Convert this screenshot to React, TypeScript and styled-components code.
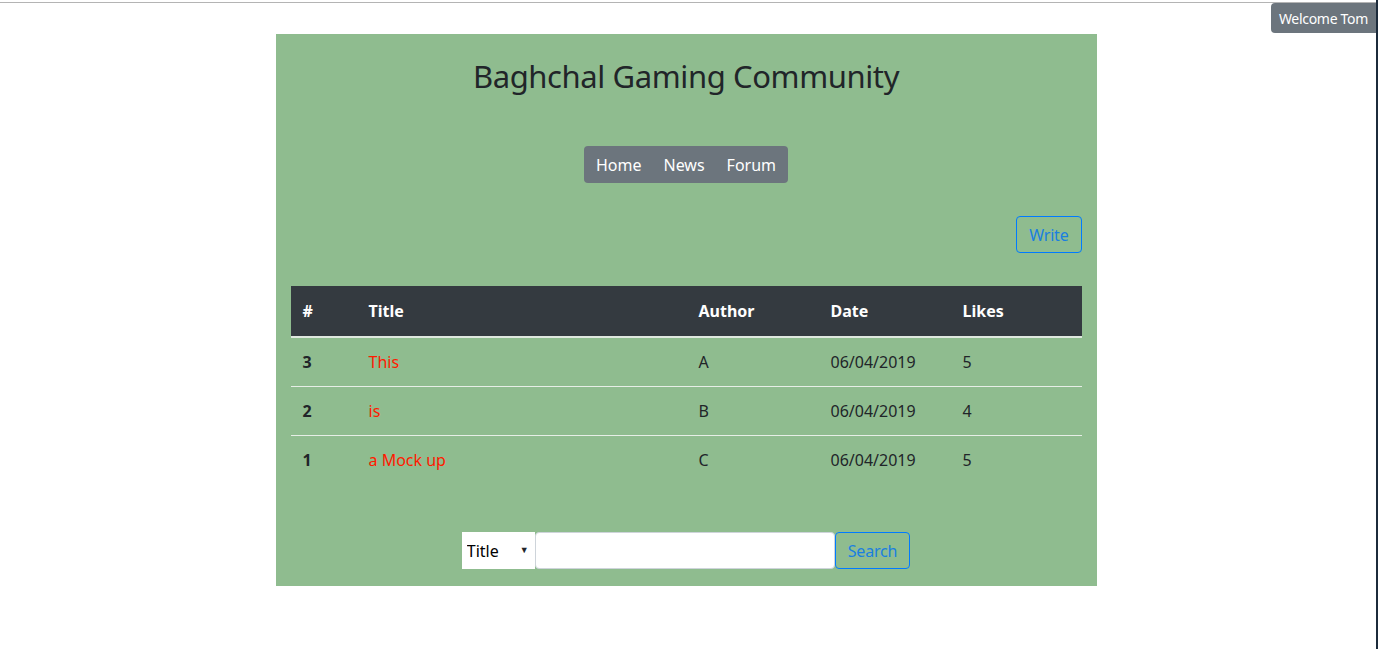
import styled, { createGlobalStyle } from 'styled-components'

const GlobalStyle = createGlobalStyle`
  html, body {
    margin: 0;
    padding: 0;
    background: #ffffff;
  }
  body {
    font-family: 'Noto Sans', 'Open Sans', sans-serif;
    color: #212529;
  }
  * {
    box-sizing: border-box;
  }
`

const Frame = styled.div`
  min-height: 100vh;
  border-right: 2px solid #1c2b3b;
  display: flex;
  flex-direction: column;
`

const TopRule = styled.div`
  margin-top: 2px;
  height: 1px;
  background: #b4b4b4;
`

const BadgeRow = styled.div`
  display: flex;
  justify-content: flex-end;
  height: 31px;
`

const Badge = styled.div`
  width: 105px;
  height: 30px;
  display: flex;
  align-items: center;
  justify-content: center;
  background: #6c757d;
  color: #ffffff;
  font-size: 14px;
  letter-spacing: -0.3px;
  border-radius: 4px 0 0 4px;
`

const Board = styled.div`
  width: 821px;
  margin: 0 auto;
  transform: translateX(-2px);
  background: #8fbc8f;
  padding: 0 15px 17px;
  display: flex;
  flex-direction: column;
  align-items: center;
`

const Heading = styled.h2`
  margin: 23px 0 0;
  font-size: 31px;
  font-weight: 400;
  line-height: 38px;
  letter-spacing: -0.4px;
  color: #212529;
`

const Nav = styled.nav`
  margin-top: 51px;
  display: flex;
  background: #6c757d;
  border-radius: 4px;
  padding: 0 1px;
  height: 37px;
  align-items: center;
`

const NavLink = styled.a`
  color: #ffffff;
  font-size: 16px;
  padding: 0 11px;
  text-decoration: none;
`

const Toolbar = styled.div`
  align-self: stretch;
  display: flex;
  justify-content: flex-end;
  margin-top: 33px;
`

const OutlineButton = styled.button`
  height: 37px;
  padding: 0 12px;
  background: transparent;
  border: 1px solid #007bff;
  border-radius: 4px;
  color: #1a7fe0;
  font-family: inherit;
  font-size: 16px;
  letter-spacing: -0.2px;
`

const Table = styled.table`
  align-self: stretch;
  margin-top: 33px;
  border-collapse: collapse;
  font-size: 16px;
`

const HeadCell = styled.th<{ $w?: number }>`
  background: #343a40;
  color: #ffffff;
  font-weight: 700;
  text-align: left;
  padding: 13px 12px;
  line-height: 24px;
  border-bottom: 2px solid #dfe8df;
  width: ${p => (p.$w ? `${p.$w}px` : 'auto')};
`

const Cell = styled.td<{ $bold?: boolean; $link?: boolean }>`
  padding: 12px;
  line-height: 24px;
  border-top: 1px solid #e6eee6;
  font-weight: ${p => (p.$bold ? 700 : 400)};
  color: ${p => (p.$link ? '#ff1a00' : '#212529')};
`

const FirstRow = styled.tr`
  td {
    border-top: none;
  }
`

const SearchForm = styled.form`
  margin-top: 48px;
  display: flex;
  height: 37px;
`

const SelectWrap = styled.div`
  position: relative;
  width: 73px;
  background: #ffffff;
`

const Select = styled.select`
  appearance: none;
  width: 100%;
  height: 100%;
  border: none;
  background: transparent;
  font-family: inherit;
  font-size: 16px;
  padding: 0 5px;
  color: #000000;
`

const Arrow = styled.span`
  position: absolute;
  right: 6px;
  top: 11px;
  font-size: 9px;
  pointer-events: none;
`

const SearchInput = styled.input`
  width: 300px;
  border: 1px solid #ced4da;
  border-radius: 4px;
  background: #ffffff;
`

const rows = [
  { id: 3, title: 'This', author: 'A', date: '06/04/2019', likes: 5 },
  { id: 2, title: 'is', author: 'B', date: '06/04/2019', likes: 4 },
  { id: 1, title: 'a Mock up', author: 'C', date: '06/04/2019', likes: 5 },
]

function App() {
  return (
    <>
      <GlobalStyle />
      <Frame>
        <TopRule />
        <BadgeRow>
          <Badge>Welcome Tom</Badge>
        </BadgeRow>
        <Board>
          <Heading>Baghchal Gaming Community</Heading>
          <Nav>
            <NavLink>Home</NavLink>
            <NavLink>News</NavLink>
            <NavLink>Forum</NavLink>
          </Nav>
          <Toolbar>
            <OutlineButton>Write</OutlineButton>
          </Toolbar>
          <Table>
            <thead>
              <tr>
                <HeadCell $w={66}>#</HeadCell>
                <HeadCell $w={330}>Title</HeadCell>
                <HeadCell $w={132}>Author</HeadCell>
                <HeadCell $w={132}>Date</HeadCell>
                <HeadCell>Likes</HeadCell>
              </tr>
            </thead>
            <tbody>
              {rows.map((r, i) => {
                const cells = (
                  <>
                    <Cell $bold>{r.id}</Cell>
                    <Cell $link>{r.title}</Cell>
                    <Cell>{r.author}</Cell>
                    <Cell>{r.date}</Cell>
                    <Cell>{r.likes}</Cell>
                  </>
                )
                return i === 0 ? <FirstRow key={r.id}>{cells}</FirstRow> : <tr key={r.id}>{cells}</tr>
              })}
            </tbody>
          </Table>
          <SearchForm onSubmit={e => e.preventDefault()}>
            <SelectWrap>
              <Select defaultValue="title">
                <option value="title">Title</option>
                <option value="author">Author</option>
              </Select>
              <Arrow>▼</Arrow>
            </SelectWrap>
            <SearchInput />
            <OutlineButton>Search</OutlineButton>
          </SearchForm>
        </Board>
      </Frame>
    </>
  )
}

export default App
